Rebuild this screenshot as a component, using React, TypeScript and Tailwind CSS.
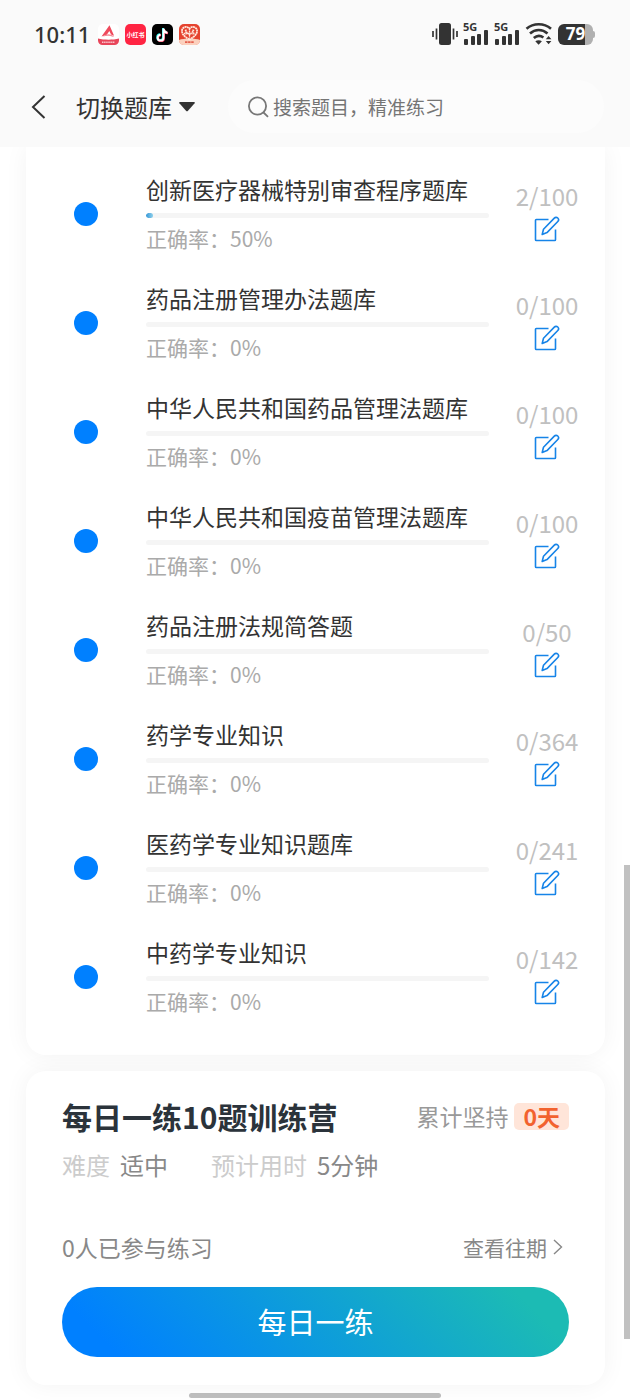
import React from "react";

const banks = [
  { id: 1, name: "创新医疗器械特别审查程序题库", done: 2, total: 100, rate: 50 },
  { id: 2, name: "药品注册管理办法题库", done: 0, total: 100, rate: 0 },
  { id: 3, name: "中华人民共和国药品管理法题库", done: 0, total: 100, rate: 0 },
  { id: 4, name: "中华人民共和国疫苗管理法题库", done: 0, total: 100, rate: 0 },
  { id: 5, name: "药品注册法规简答题", done: 0, total: 50, rate: 0 },
  { id: 6, name: "药学专业知识", done: 0, total: 364, rate: 0 },
  { id: 7, name: "医药学专业知识题库", done: 0, total: 241, rate: 0 },
  { id: 8, name: "中药学专业知识", done: 0, total: 142, rate: 0 },
];

function AppIcons() {
  return (
    <div className="flex gap-[6px]">
      <svg width="21" height="21" viewBox="0 0 21 21">
        <rect width="21" height="21" rx="5" fill="#fff" />
        <path d="M3.5 12.5 11.5 1.2l4.6 10.6-3-1.2-1.8-3.6-2.5 3.8z" fill="#ef4a5c" />
        <path d="M5 12.6c3.5-3.2 7-3 11.2-.4l-1.5.6c-3-1.4-6-1.4-9.7-.2z" fill="#f58b97" />
        <path d="M0 14.5c6 1.6 15 1.6 21 0v2a4.5 4.5 0 0 1-4.5 4.5h-12A4.5 4.5 0 0 1 0 16.5z" fill="#e8455a" />
        <path d="M4 18.2h13" stroke="#f9c4ca" strokeWidth="1.4" strokeDasharray="1.5 .6" />
      </svg>
      <svg width="21" height="21" viewBox="0 0 21 21">
        <rect width="21" height="21" rx="5" fill="#ff2442" />
        <text x="10.5" y="12.8" textAnchor="middle" fontSize="6" fontWeight="700" fill="#fff">
          小红书
        </text>
      </svg>
      <svg width="21" height="21" viewBox="0 0 21 21">
        <rect width="21" height="21" rx="5" fill="#000" />
        <g fill="none" strokeWidth="2">
          <path d="M11 4v9.2a2.9 2.9 0 1 1-2.9-2.9M11 4.5c.4 2.3 1.9 3.6 4 3.8" stroke="#25f4ee" />
          <path d="M12 5v9.2a2.9 2.9 0 1 1-2.9-2.9M12 5.5c.4 2.3 1.9 3.6 4 3.8" stroke="#fe2c55" />
          <path d="M11.5 4.5v9.2a2.9 2.9 0 1 1-2.9-2.9M11.5 5c.4 2.3 1.9 3.6 4 3.8" stroke="#fff" />
        </g>
      </svg>
      <svg width="21" height="21" viewBox="0 0 21 21">
        <rect width="21" height="21" rx="5" fill="#e5432f" />
        <path d="M0 16c5-2 16-2 21 0v.5a4.5 4.5 0 0 1-4.5 4.5h-12A4.5 4.5 0 0 1 0 16.500z" fill="#fbd0bd" />
        <path
          d="M10.5 15.5C5 12.5 2.5 9.5 3 6.200c.5-3.400 5.300-4.600 7.500-1.400 2.200-3.200 7-2 7.500 1.400.5 3.300-2 6.300-7.500 9.300z"
          fill="#e5432f"
          stroke="#ffe9df"
          strokeWidth="1.8"
          strokeDasharray="2 .4"
        />
        <path
          d="M10.5 5v9M6 6l4.500 5L15 6M5 9.500h11M7 5.500v5M14 5.500v5"
          stroke="#ffe9df"
          strokeWidth="1.3"
          strokeDasharray="1.5 .6"
          fill="none"
        />
        <path d="M6 18.2h9" stroke="#e5604f" strokeWidth="1.8" strokeDasharray="2.5 .6" />
      </svg>
    </div>
  );
}

function Signal() {
  return (
    <svg width="26" height="30" viewBox="0 -3 26 30" fill="#333">
      <text x="0" y="9" fontSize="11" fontWeight="700" fontFamily="Noto Sans">
        5G
      </text>
      <rect x="1" y="17" width="4" height="6" rx="1" />
      <rect x="8" y="14" width="4" height="9" rx="1" />
      <rect x="14" y="12" width="4" height="11" rx="1" />
      <rect x="21" y="8" width="4" height="15" rx="1" />
    </svg>
  );
}

function StatusBar() {
  return (
    <div className="flex h-[68px] items-center justify-between pl-[34px] pr-[35px]">
      <div className="flex items-center gap-2">
        <span className="font-['Noto_Sans',sans-serif] text-[22px] font-medium leading-8 text-[#333]">
          10:11
        </span>
        <AppIcons />
      </div>
      <div className="flex items-center gap-[5px]">
        <svg width="26" height="24" viewBox="0 0 26 24" fill="#333">
          <rect x="7" y="1" width="12" height="22" rx="2.5" />
          <path d="M1 9v6M4.500 6.500v11M21.500 6.500v11M25 9v6" stroke="#333" strokeWidth="1.7" />
        </svg>
        <Signal />
        <Signal />
        <svg width="28" height="24" viewBox="0 0 28 24" fill="none" stroke="#333" strokeWidth="2.6">
          <path d="M1.500 6.800c7-6 17.500-6 24.500 0M5 11.500c5-4.600 12.500-4.600 17.500 0M8.800 16c3-2.600 6.800-2.600 9.600-.4" />
          <path d="M10.300 19.200c2-1.400 4.600-1.400 6.600 0l-3.300 3.600z" fill="#333" stroke="none" />
          <path d="M20.800 17.200 23.600 14l2.800 3.200zM20.800 19l2.800 3.300 2.800-3.300z" fill="#333" stroke="none" />
        </svg>
        <div className="flex items-center">
          <div className="flex h-[21px] w-[35px] items-center justify-center rounded-[6px] bg-[linear-gradient(90deg,#333_78%,#b0b0b0_78%)] font-['Noto_Sans',sans-serif] text-[17px] font-bold leading-5 text-white">
            79
          </div>
          <div className="h-[7px] w-[2px] rounded-r-sm bg-[#b0b0b0]"></div>
        </div>
      </div>
    </div>
  );
}

function Header() {
  return (
    <header className="relative z-10 bg-[#fafafa] pb-[14px]">
      <StatusBar />
      <div className="flex items-center pl-[31px] pr-[26px] pt-3">
        <button type="button" aria-label="返回">
          <svg width="15" height="24" viewBox="0 0 15 24" fill="none" stroke="#333" strokeWidth="2">
            <path d="M13.500 1 2 12l11.500 11" />
          </svg>
        </button>
        <button type="button" className="ml-[30px] flex items-center gap-[7px] text-2xl text-[#333]">
          切换题库
          <svg width="16" height="10" viewBox="0 0 16 10" fill="#333">
            <path d="M1 0h14q1.500 0 .6 1.200L9 8.800q-1 1-2 0L.4 1.200Q-.5 0 1 0z" />
          </svg>
        </button>
        <label className="ml-[33px] flex h-[53px] min-w-0 flex-1 items-center gap-1 rounded-full bg-[#fcfcfc] pl-5">
          <svg width="21" height="22" viewBox="0 0 21 22" fill="none" stroke="#777" strokeWidth="1.8" className="shrink-0">
            <circle cx="9.5" cy="10" r="8.6" />
            <path d="m15.500 16.500 4.500 4.300" />
          </svg>
          <input
            type="text"
            aria-label="搜索题目"
            placeholder="搜索题目，精准练习"
            className="min-w-0 flex-1 bg-transparent text-[19px] leading-8 outline-none placeholder:text-[#757575]"
          />
        </label>
      </div>
    </header>
  );
}

function EditIcon() {
  return (
    <svg width="26" height="26" viewBox="0 0 26 26" fill="none" stroke="#1684e8" strokeWidth="1.6" strokeLinejoin="round">
      <path d="M14.500 3.500H2.300q-.8 0-.8.8v19.400q0 .8.800.8h18.400q.8 0 .8-.8V13.500" />
      <path d="M8.200 18.500l1.300-5.300L20.300 2.100a2.400 2.400 0 0 1 3.500 3.400L13 16.600z" />
    </svg>
  );
}

export default function App() {
  return (
    <div className="relative min-h-screen overflow-hidden bg-white font-['Noto_Sans_CJK_SC',sans-serif]">
      <Header />
      <main className="flex flex-col gap-4 pl-[26px] pr-[25px]">
        <ul className="rounded-b-[20px] bg-white pb-6 pt-3 shadow-[0_0_24px_rgba(0,0,0,0.05)]">
          {banks.map((bank) => (
            <li key={bank.id} className="flex items-center py-[14px] pl-12">
              <span className="size-6 shrink-0 rounded-full bg-[#0080ff]"></span>
              <div className="ml-12 min-w-0 flex-1">
                <h2 className="truncate text-[23px] leading-8 text-[#333]">{bank.name}</h2>
                <div className="mb-1 mt-2 h-[5px] overflow-hidden rounded-full bg-[#f5f5f5]">
                  <div
                    className="h-full rounded-full bg-linear-to-r from-[#2f97d8] to-[#8fd0ea]"
                    style={{ width: `${(bank.done / bank.total) * 100}%` }}
                  ></div>
                </div>
                <p className="text-[21px] leading-8 text-[#aaa]">正确率：{bank.rate}%</p>
              </div>
              <div className="flex w-[116px] flex-col items-center gap-1 pb-[6px]">
                <span className="text-2xl leading-8 text-[#c0c0c0]">
                  {bank.done}/{bank.total}
                </span>
                <button type="button" aria-label={`练习${bank.name}`}>
                  <EditIcon />
                </button>
              </div>
            </li>
          ))}
        </ul>

        <section className="rounded-[20px] bg-white px-9 pb-7 pt-[23px] shadow-[0_0_24px_rgba(0,0,0,0.05)]">
          <div className="flex items-center justify-between">
            <h2 className="text-[30px] font-bold leading-[44px] text-[#2b333b]">每日一练10题训练营</h2>
            <div className="flex items-center gap-[6px] text-[23px] text-[#999]">
              累计坚持
              <span className="rounded-[5px] bg-[#ffe5d9] px-[9px] font-bold leading-[27px] text-[#f2622e]">0天</span>
            </div>
          </div>
          <div className="mt-[9px] flex gap-[43px] text-2xl leading-9 text-[#888]">
            <p className="flex gap-[10px]">
              <span className="text-[#ccc]">难度</span>适中
            </p>
            <p className="flex gap-[10px]">
              <span className="text-[#ccc]">预计用时</span>5分钟
            </p>
          </div>
          <div className="mt-12 flex items-center justify-between leading-8 text-[#888]">
            <p className="text-[23px] leading-8">0人已参与练习</p>
            <a href="#history" className="flex items-center gap-[6px] pr-[6px] text-[21px]">
              查看往期
              <svg width="10" height="16" viewBox="0 0 10 16" fill="none" stroke="#888" strokeWidth="1.4">
                <path d="m1 1 7.500 7L1 15" />
              </svg>
            </a>
          </div>
          <button
            type="button"
            className="mt-6 h-[70px] w-full rounded-full bg-[linear-gradient(45deg,#0080ff_10%,#1cbbb4_90%)] text-[29px] text-white"
          >
            每日一练
          </button>
        </section>
      </main>
      <div className="mx-auto mb-[2px] mt-2 h-[5px] w-2/5 rounded-full bg-[#bfbfbf]"></div>
      <div className="absolute right-0 top-[865px] h-[474px] w-[6px] bg-[#c1c1c1]"></div>
    </div>
  );
}
